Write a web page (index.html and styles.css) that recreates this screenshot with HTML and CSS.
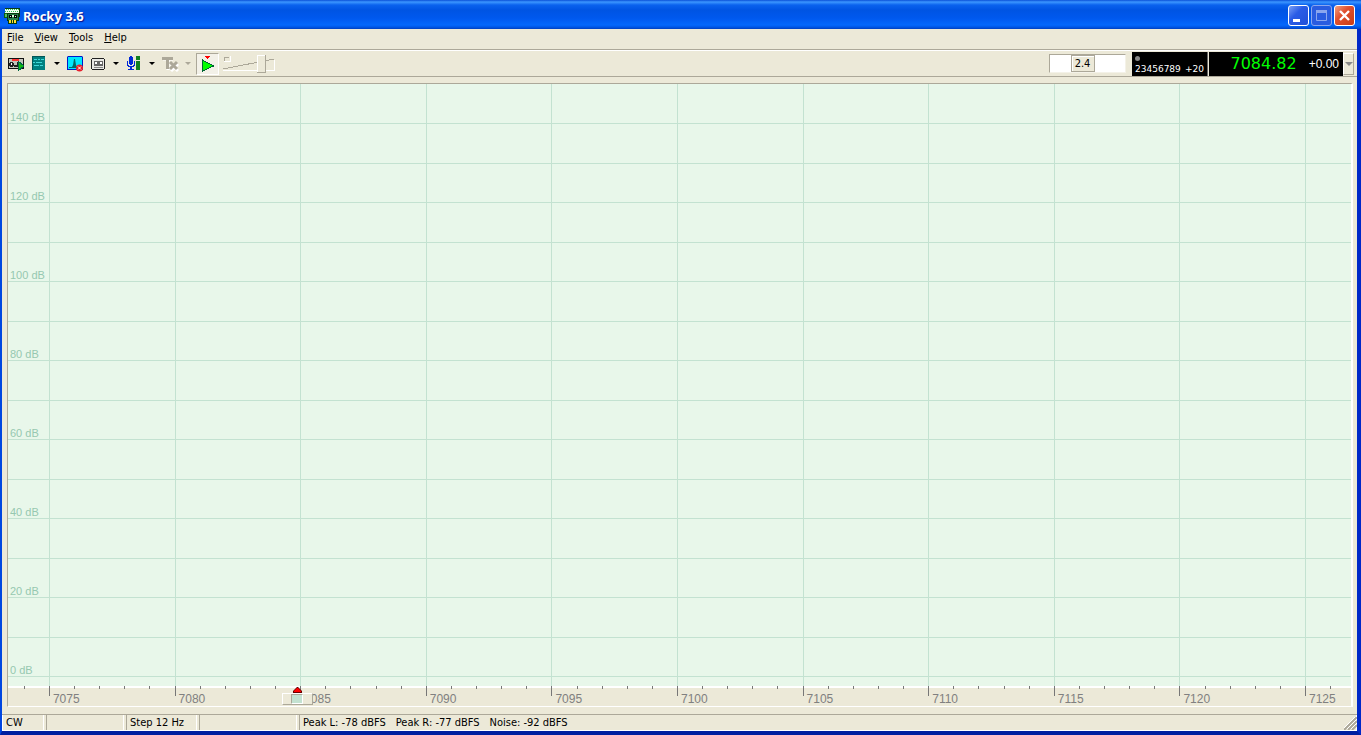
FILE: index.html
```html
<!DOCTYPE html>
<html lang="en">
<head>
<meta charset="utf-8">
<title>Rocky 3.6</title>
<link rel="stylesheet" href="styles.css">
</head>
<body>
<div class="window">
  <header class="titlebar">
    <svg class="app-icon" viewBox="0 0 16 16" width="16" height="16" shape-rendering="crispEdges">
      <path d="M1 0h15v9h-15z" fill="#0c3c14"/>
      <path d="M1 1h14v7h-14z" fill="#f0fff0"/>
      <path d="M2 1.500h13M1 3.500h13M2 5.500h13" stroke="#30c050" stroke-dasharray="1 1"/>
      <path d="M0 5h4v5h-4z" fill="#0c5c14"/>
      <path d="M1 6h2v3h-2z" fill="#50c060"/>
      <path d="M3 5h12v8h-2v3h-9v-3h-1z" fill="#063c10"/>
      <path d="M4 6h10v6h-10z" fill="#28804a"/>
      <path d="M5 7h3v3h-3zM10 7h3v3h-3z" fill="#000"/>
      <path d="M6 8h1v1h-1zM8 7h2v2h-2zM11 8h1v1h-1z" fill="#d8ffd8"/>
      <path d="M5 12h2v3h-2zM8 12h1v3h-1zM10 12h2v3h-2z" fill="#ffe030"/>
    </svg>
    <h1 class="title">Rocky 3.6</h1>
    <button class="caption-button" type="button" aria-label="Minimize"><svg viewBox="0 0 19 19" width="19" height="19"><path d="M4 13h7v3h-7z" fill="#fff"/></svg></button>
    <button class="caption-button dim" type="button" aria-label="Maximize" disabled><svg viewBox="0 0 19 19" width="19" height="19"><path d="M4.500 4.500h10v10h-10z" fill="none" stroke="#8ba6ee" stroke-width="1"/><path d="M4 4h11v3h-11z" fill="#8ba6ee"/></svg></button>
    <button class="caption-button close" type="button" aria-label="Close"><svg viewBox="0 0 19 19" width="19" height="19"><path d="M5 5l9 9M14 5l-9 9" stroke="#fff" stroke-width="2.400"/></svg></button>
  </header>

  <nav class="menubar">
    <button type="button"><u>F</u>ile</button>
    <button type="button"><u>V</u>iew</button>
    <button type="button"><u>T</u>ools</button>
    <button type="button"><u>H</u>elp</button>
  </nav>

  <div class="toolbar">
    <button class="tool" type="button" aria-label="Start radio"><svg viewBox="0 0 17 16" width="17" height="16" shape-rendering="crispEdges"><path d="M0 2h16v11h-16z" fill="#111"/><path d="M1 3h14v9h-14z" fill="#c4c4bc"/><path d="M4 3h7v2h-7z" fill="#f33"/><path d="M2 6h3v1h1v3h-1v1h-3v-1h-1v-3h1zM9 6h3v5h-3zM6 9h3v2h-3z" fill="#222"/><path d="M3 7h1v2h-1zM10 7h1v2h-1z" fill="#fff"/><path d="M10 5l6 5l-6 5z" fill="#1b1" stroke="#064" stroke-width="1"/></svg></button>
    <button class="tool" type="button" aria-label="Display mode"><svg viewBox="0 0 16 16" width="16" height="16" shape-rendering="crispEdges"><path d="M1 0h13v14h-13z" fill="#008080"/><path d="M1 0h13v1h-13zM1 1h1v13h-1z" fill="#055"/><path d="M3 3h3v1h-3zM7 3h2v1h-2zM10 3h3v1h-3zM2 6h2v1h-2zM5 6h6v1h-6zM3 9h5v1h-5zM9 9h3v1h-3z" fill="#40d8d8"/></svg></button>
    <button class="drop" type="button" aria-label="Display options"></button>
    <button class="tool" type="button" aria-label="Spectrum"><svg viewBox="0 0 17 16" width="17" height="16"><path d="M0 1l1-1h14l1 1v13h-16z" fill="#0018c8"/><path d="M1 1h14v12h-14z" fill="#00e8ff"/><path d="M2 11h3l1-2l1-6h1l1 6l1 2h3v1h-11z" fill="#006868"/><circle cx="12.500" cy="12" r="3.500" fill="#e8202c"/><path d="M11 10.500l3 3M14 10.500l-3 3" stroke="#fff" stroke-width="1"/></svg></button>
    <button class="tool" type="button" aria-label="Recorder"><svg viewBox="0 0 16 16" width="16" height="16" shape-rendering="crispEdges"><path d="M2 2h12v1h1v10h-1v1h-12v-1h-1v-10h1z" fill="#222"/><path d="M2 3h12v10h-12z" fill="#e8e8e4"/><path d="M4 5h9v5h-9z" fill="#666"/><path d="M5 6h2v2h-2zM10 6h2v2h-2z" fill="#fff"/><path d="M4 11h9v1h-9z" fill="#888"/></svg></button>
    <button class="drop" type="button" aria-label="Recorder options"></button>
    <button class="tool" type="button" aria-label="Audio"><svg viewBox="0 0 16 16" width="16" height="16" shape-rendering="crispEdges"><path d="M4 0h2v1h1v7h-1v1h-2v-1h-1v-7h1zM1 5h1v4h1v1h4v-1h1v-4h1v5h-1v1h-2v2h2v1h-6v-1h2v-2h-2v-1h-1z" fill="#0028d8"/><path d="M10 0h4v4h-4zM10 5h4v9h-4z" fill="#108020"/></svg></button>
    <button class="drop" type="button" aria-label="Audio options"></button>
    <button class="tool" type="button" aria-label="Transmit" disabled><svg viewBox="0 0 17 16" width="17" height="16"><path d="M0 2h10M5 2v11M8 7l7 7M15 7l-7 7" transform="translate(1 1)" stroke="#fff" stroke-width="3" fill="none"/><path d="M0 2.500h11M5.500 2v11M8 6l7 7M15 6l-7 7" stroke="#aca899" stroke-width="3" fill="none"/></svg></button>
    <button class="drop dim" type="button" aria-label="Transmit options" disabled></button>
    <button class="tool pressed" type="button" aria-label="Play"><svg viewBox="0 0 16 16" width="16" height="16" shape-rendering="crispEdges"><path d="M5 0h5l-2 3h-1z" fill="#f00"/><path d="M2.500 4v11l11-5z" fill="#0f0" stroke="#063" stroke-width="1"/></svg></button>
    <div class="volume" role="img" aria-label="Volume"><svg viewBox="0 0 52 20" width="52" height="20" shape-rendering="crispEdges"><path d="M1 7v-4h5" fill="none" stroke="#aca899"/><path d="M1 7h6v-5" fill="none" stroke="#fff"/><path d="M0 15l51-10" stroke="#aca899"/><path d="M0 16h51v-10" fill="none" stroke="#fff"/><path d="M34 1h8v17h-8z" fill="#ece9d8"/><path d="M34 18v-17h8" fill="none" stroke="#fff"/><path d="M34 18h8v-17" fill="none" stroke="#aca899"/></svg></div>
    <div class="filter"><button class="filter-thumb" type="button">2.4</button></div>
    <div class="meter"><span class="led"></span><div class="scale"><span>23456789</span><span>+20</span></div></div>
    <div class="frequency"><output class="main-frequency">7084.82</output><output class="offset">+0.00</output></div>
    <button class="drop frequency-drop dim" type="button" aria-label="Frequency options"></button>
  </div>

  <main class="chart">
    <div class="plot" id="plot"></div>
    <div class="ruler" id="ruler">
      <div class="tuner" id="tuner"><svg class="pointer" viewBox="0 0 9 6" width="9" height="6"><path d="M4 0h1l4 4v2h-9v-2z" fill="#600"/><path d="M4 1h1l3 3v1h-7v-1z" fill="#f00"/></svg><span class="passband"></span></div>
    </div>
  </main>

  <footer class="statusbar">
    <span class="cell mode">CW</span>
    <span class="cell blank"></span>
    <span class="cell step">Step 12 Hz</span>
    <span class="cell wide"></span>
    <span class="cell levels"><span>Peak L: -78 dBFS</span><span>Peak R: -77 dBFS</span><span>Noise: -92 dBFS</span></span>
    <svg class="grip" viewBox="0 0 13 13" width="13" height="13"><path d="M0 13l13-13M4 13l9-9M8 13l5-5" stroke="#aca899" stroke-width="2"/><path d="M-1 12l13-13M3 12l10-10M7 12l6-6" stroke="#fff" stroke-width="1"/></svg>
  </footer>
</div>
<script src="chart.js"></script>
</body>
</html>
```
FILE: styles.css
```css
* { box-sizing: border-box; }
body {
  margin: 0;
  font: 11px/14px Tahoma, "DejaVu Sans Condensed", sans-serif;
  color: #000;
  background: #0831d9;
}
button { margin: 0; padding: 0; border: 0; background: none; font: inherit; color: inherit; }
svg { display: block; }
.window {
  display: flex;
  flex-direction: column;
  height: 100vh;
  background: #ece9d8;
  border: solid #0046e0;
  border-width: 0 4px 4px 2px;
  border-right-color: #0028c8;
  border-bottom-color: #001ea0;
}
.titlebar {
  display: flex;
  align-items: center;
  gap: 2px;
  height: 29px;
  flex: none;
  margin: 0 -4px 0 -2px;
  padding: 2px 6px 0 4px;
  background: linear-gradient(#0a50d8 0, #3c96ff 2px, #0a62ee 5px, #0054e3 10px, #0058ee 18px, #0468fc 25px, #0058e8 27px, #0040c0 29px);
}
.title {
  flex: 1;
  margin: 0 0 0 1px;
  font: bold 13px/16px "Noto Sans", sans-serif;
  color: #fff;
  text-shadow: 1px 1px 1px #0f1089;
}
.caption-button {
  width: 21px;
  height: 21px;
  border: 1px solid #fff;
  border-radius: 3px;
  background: linear-gradient(135deg, #7ba0f4, #2a5ce6 40%, #2050d8);
}
.caption-button.dim { border-color: #8ba6ee; background: #2a5ce0; }
.caption-button.close { background: linear-gradient(135deg, #f0a080, #e05030 40%, #c83c14); }
.menubar { display: flex; flex: none; gap: 12px; height: 21px; padding: 0 5px; border-bottom: 1px solid #aca899; }
.menubar button { line-height: 18px; }
.menubar button { margin-right: -1px; align-self: flex-start; }
.toolbar {
  display: flex;
  align-items: center;
  flex: none;
  height: 27px;
  padding: 0 3px 0 4px;
  border: solid #fff;
  border-width: 1px 0;
  border-bottom-color: #aca899;
}
.tool { display: flex; align-items: center; justify-content: center; width: 23px; height: 22px; flex: none; padding-right: 3px; }
.drop { display: flex; align-items: center; justify-content: center; width: 13px; height: 22px; flex: none; padding-right: 4px; }
.drop::after { content: ""; border: solid transparent; border-width: 3px 3px 0; border-top-color: #000; }
.drop.dim::after { border-top-color: #aca899; }
.tool.pressed { padding: 0; border: 1px solid #aca899; border-right-color: #fff; border-bottom-color: #fff; background: #f3f1e8; }
.volume { margin-left: 4px; }
.filter {
  display: flex;
  justify-content: center;
  width: 77px;
  height: 19px;
  margin: 0 6px 0 auto;
  padding-right: 10px;
  background: #fff;
  border: 1px solid #aca899;
  border-right-color: #f4f2e8;
  border-bottom-color: #f4f2e8;
}
.filter-thumb { width: 24px; border: 1px solid #aca899; background: #ece9d8; box-shadow: inset 1px 1px #fff; }
.meter {
  display: flex;
  flex-direction: column;
  justify-content: space-between;
  width: 76px;
  height: 24px;
  padding: 4px 3px 1px 3px;
  color: #fff;
  background: #000;
  border-right: 1px solid #666;
}
.led { width: 5px; height: 5px; border-radius: 50%; background: #888; }
.scale { display: flex; justify-content: space-between; font: 9px/11px "DejaVu Sans", sans-serif; }
.frequency { display: flex; align-items: center; justify-content: flex-end; gap: 12px; width: 134px; height: 24px; margin-left: 1px; padding-right: 4px; background: #000; }
.main-frequency { font: 16px/20px "DejaVu Sans", sans-serif; color: #0f0; }
.offset { font: 12px/20px "Liberation Sans", sans-serif; color: #fff; }
.frequency-drop { width: 11px; padding: 0; border: 1px solid #aca899; border-top-color: #fff; border-left-color: #fff; }
.frequency-drop.dim::after { border-width: 4px 4px 0; border-top-color: #888; }
.chart {
  display: flex;
  flex-direction: column;
  flex: 1;
  min-height: 0;
  margin: 6px 4px 7px 5px;
  border: 1px solid #aca899;
  border-right: 2px solid #fff;
  border-bottom-color: #fff;
}
.plot { position: relative; flex: 1; overflow: hidden; background: #e8f7ea; }
.row-line, .column-line { position: absolute; background: #c3e2d1; }
.row-line { left: 0; right: 0; height: 1px; }
.column-line { top: 0; bottom: 0; width: 1px; }
.level { position: absolute; bottom: 0; left: 2px; color: #96c8b0; white-space: nowrap; font: 11px/14px "Liberation Sans", sans-serif; }
.ruler { position: relative; flex: none; height: 20px; border-top: 2px solid #fff; color: #808080; }
.tick { position: absolute; top: -2px; width: 1px; height: 3px; background: #777; }
.tick.major { height: 10px; }
.tick span { position: absolute; top: 6px; left: 4px; font: 12px/14px "Liberation Sans", sans-serif; }
.tuner {
  position: absolute;
  top: 5px;
  display: flex;
  justify-content: center;
  width: 31px;
  height: 12px;
  margin-left: -14px;
  background: #ece9d8;
  border: 1px solid #fff;
  border-right-color: #aca899;
  border-bottom-color: #aca899;
}
.pointer { position: absolute; top: -7px; }
.passband { width: 12px; height: 10px; background: #c3e2d1; border: 1px solid #aca899; border-right-color: #fff; border-bottom-color: #fff; }
.statusbar { position: relative; display: flex; gap: 2px; flex: none; height: 17px; border-top: 1px solid #aca899; border-bottom: 1px solid #fff; }
.cell { padding: 1px 3px 0; border-left: 1px solid #aca899; border-right: 1px solid #fff; white-space: pre; }
.cell.mode { width: 42px; border-left-color: #fff; }
.cell.blank { width: 78px; }
.cell.step { width: 71px; }
.cell.wide { width: 98px; }
.cell.levels { display: flex; flex: 1; gap: 10px; }
.grip { position: absolute; right: 0; bottom: 0; }
```
FILE: chart.js
```js
const low = 7073.37, span = 53.46;
const top_dB = 150, range_dB = 152.5;
const plot = document.getElementById("plot");
const ruler = document.getElementById("ruler");

function add(parent, className, side, percent, text) {
  const node = document.createElement("div");
  node.className = className;
  node.style[side] = percent + "%";
  if (text) {
    const label = document.createElement("span");
    label.textContent = text;
    if (parent === plot) label.className = "level";
    node.append(label);
  }
  parent.prepend(node);
}

for (let level = 140; level >= 0; level -= 10) {
  add(plot, "row-line", "top", (top_dB - level) / range_dB * 100, level % 20 ? "" : level + " dB");
}
for (let f = 7074; f <= 7126; f++) {
  const x = (f - low) / span * 100;
  const major = f % 5 === 0;
  if (major) add(plot, "column-line", "left", x);
  add(ruler, major ? "tick major" : "tick", "left", x, major ? String(f) : "");
}
document.getElementById("tuner").style.left = (7084.82 - low) / span * 100 + "%";
```
